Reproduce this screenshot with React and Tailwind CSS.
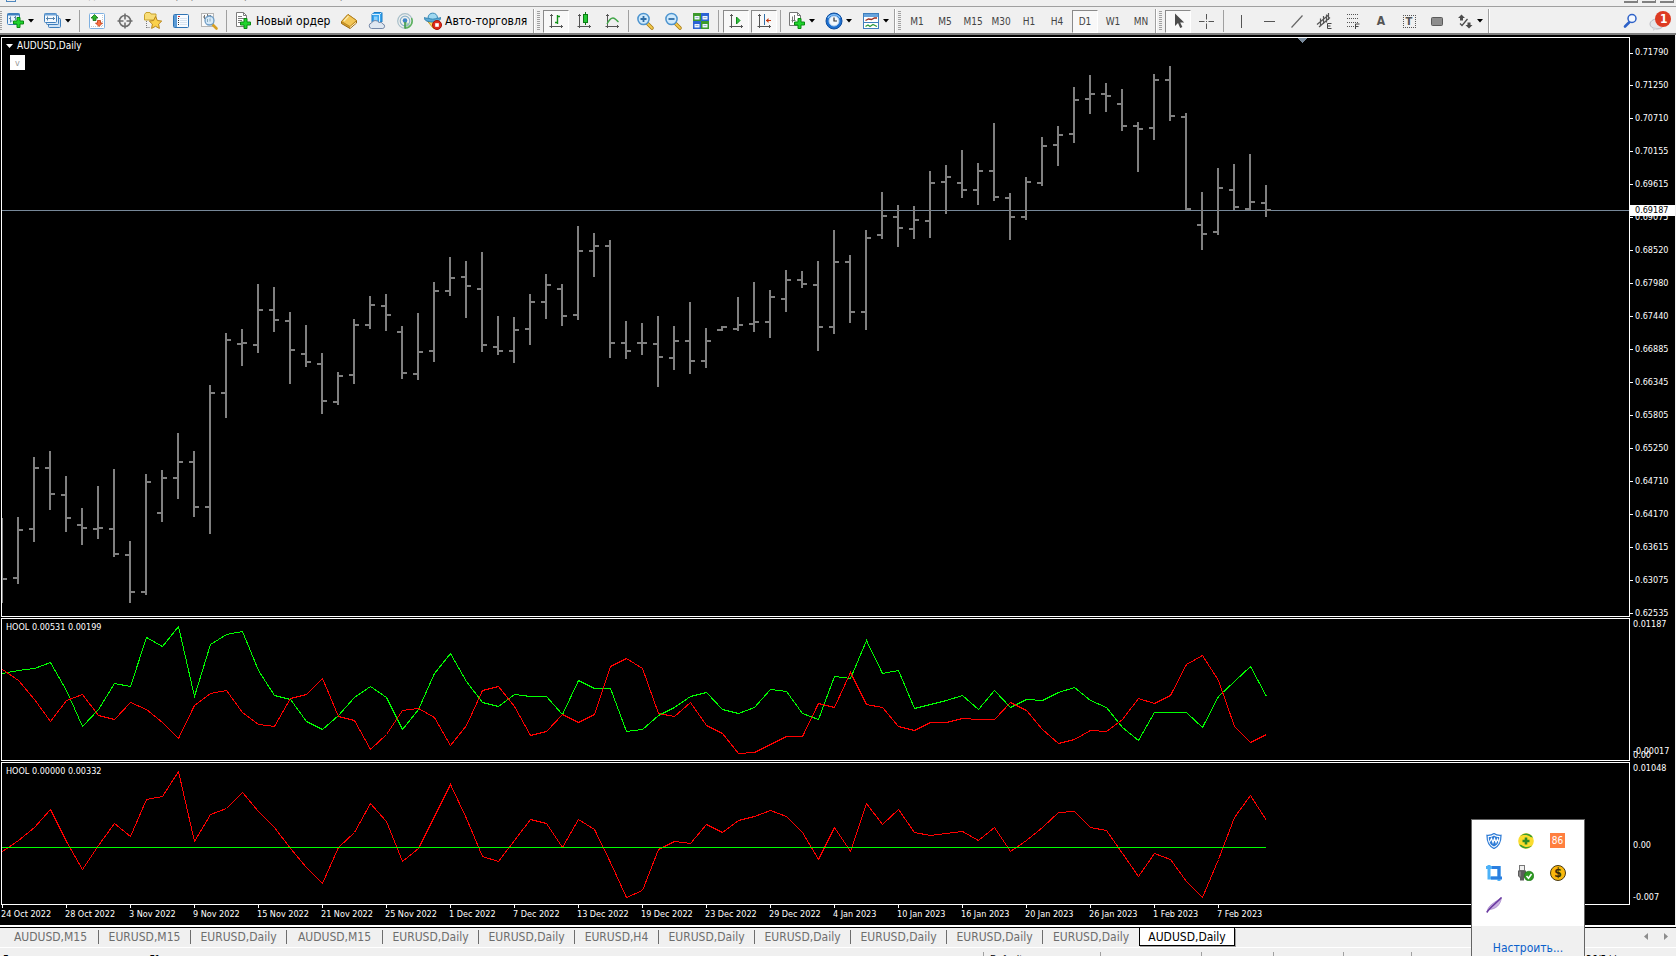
import { clsx } from 'clsx';

const STEP = 16;

// [high, low, open, close] of each daily bar, in chart pixels
const BARS = [
  [518, 603, null, 579], [517, 584, 578, 530], [457, 542, 529, 468], [451, 510, 468, 494],
  [476, 532, 495, 518], [508, 545, 525, 528], [486, 539, 529, 528], [469, 557, 529, 554],
  [541, 603, 555, 592], [474, 595, 592, 482], [470, 522, 513, 478], [433, 499, 478, 462],
  [451, 517, 462, 507], [385, 534, 507, 393], [333, 418, 393, 340], [329, 366, 344, 343],
  [284, 353, 345, 310], [287, 332, 310, 320], [312, 384, 321, 350], [325, 367, 354, 362],
  [353, 414, 364, 401], [372, 405, 402, 376], [319, 384, 375, 325], [296, 329, 325, 305],
  [294, 331, 306, 315], [326, 379, 332, 373], [313, 380, 374, 352], [282, 362, 351, 291],
  [257, 296, 291, 278], [261, 318, 277, 286], [252, 352, 289, 345], [316, 355, 347, 351],
  [317, 363, 351, 330], [294, 345, 329, 302], [274, 319, 302, 285], [284, 326, 289, 316],
  [226, 320, 315, 251], [233, 277, 251, 246], [240, 358, 246, 343], [321, 359, 343, 351],
  [323, 355, 343, 343], [316, 387, 344, 357], [326, 370, 358, 341], [302, 374, 341, 361],
  [328, 368, 361, 341], [326, 331, 330, 327], [297, 331, 329, 325], [282, 332, 324, 322],
  [290, 338, 322, 297], [270, 312, 299, 280], [271, 288, 280, 284], [261, 351, 285, 327],
  [230, 334, 327, 262], [255, 323, 262, 312], [230, 330, 312, 238], [192, 239, 235, 216],
  [205, 247, 217, 228], [206, 239, 229, 220], [171, 238, 221, 183], [165, 214, 182, 177],
  [150, 198, 183, 190], [163, 205, 190, 171], [123, 201, 171, 197], [193, 240, 198, 217],
  [177, 220, 217, 182], [137, 186, 183, 146], [126, 166, 145, 135], [87, 143, 134, 100],
  [75, 114, 99, 94], [83, 112, 94, 96], [89, 131, 104, 126], [122, 172, 126, 129],
  [74, 140, 128, 80], [66, 121, 80, 116], [113, 210, 117, 209], [192, 250, 225, 234],
  [168, 235, 232, 188], [164, 210, 190, 207], [154, 210, 209, 202], [185, 217, 203, 210],
];

// indicator buffers, in thirds of a pixel below the top of the window
const UP = [
  190, 179, 175, 157, 240, 349, 298, 219, 227, 80, 109, 49, 257, 103, 73, 64, 181, 256, 267, 334,
  356, 314, 262, 227, 260, 358, 297, 188, 130, 212, 277, 287, 253, 257, 257, 312, 211, 233, 233, 364,
  358, 316, 291, 257, 247, 297, 310, 291, 238, 244, 309, 328, 199, 203, 89, 190, 181, 295, 283, 271,
  254, 298, 241, 292, 268, 271, 245, 230, 271, 290, 350, 391, 307, 307, 307, 352, 257, 213, 169, 257,
];
const DOWN = [
  178, 211, 267, 332, 269, 253, 314, 328, 277, 296, 336, 385, 284, 250, 241, 307, 343, 347, 265, 252,
  203, 319, 329, 418, 373, 299, 295, 322, 406, 344, 239, 229, 287, 376, 364, 313, 335, 313, 169, 145,
  174, 310, 319, 277, 346, 368, 430, 427, 401, 379, 379, 280, 290, 187, 283, 290, 349, 361, 337, 337,
  325, 328, 328, 277, 300, 357, 400, 388, 361, 364, 328, 265, 280, 255, 163, 136, 211, 349, 397, 373,
];
const DIFF = [
  722, 691, 651, 596, 693, 778, 706, 638, 679, 566, 559, 482, 694, 613, 595, 547, 604, 652, 713, 770,
  820, 710, 667, 580, 634, 753, 713, 619, 523, 625, 739, 754, 691, 628, 640, 712, 628, 658, 757, 862,
  841, 716, 694, 700, 643, 667, 631, 619, 601, 619, 667, 748, 652, 724, 580, 643, 598, 667, 676, 670,
  664, 691, 652, 724, 691, 652, 607, 604, 652, 661, 730, 799, 730, 748, 814, 862, 748, 622, 556, 631,
];

const PRICES = [
  '0.71790', '0.71250', '0.70710', '0.70155', '0.69615', '0.69075', '0.68520', '0.67980', '0.67440',
  '0.66885', '0.66345', '0.65805', '0.65250', '0.64710', '0.64170', '0.63615', '0.63075', '0.62535',
];

const DATES = [
  '24 Oct 2022', '28 Oct 2022', '3 Nov 2022', '9 Nov 2022', '15 Nov 2022', '21 Nov 2022', '25 Nov 2022',
  '1 Dec 2022', '7 Dec 2022', '13 Dec 2022', '19 Dec 2022', '23 Dec 2022', '29 Dec 2022', '4 Jan 2023',
  '10 Jan 2023', '16 Jan 2023', '20 Jan 2023', '26 Jan 2023', '1 Feb 2023', '7 Feb 2023',
];

const MENU = ['Файл', 'Вид', 'Вставка', 'Графики', 'Сервис', 'Окно', 'Справка'];

const TABS = [
  ['AUDUSD,M15', 'w-24'], ['EURUSD,M15', 'w-[92px]'], ['EURUSD,Daily', 'w-24'], ['AUDUSD,M15', 'w-24'],
  ['EURUSD,Daily', 'w-24'], ['EURUSD,Daily', 'w-24'], ['EURUSD,H4', 'w-[84px]'], ['EURUSD,Daily', 'w-24'],
  ['EURUSD,Daily', 'w-24'], ['EURUSD,Daily', 'w-24'], ['EURUSD,Daily', 'w-24'], ['EURUSD,Daily', 'w-24'],
];

const linePoints = (values, top) =>
  values.map((v, i) => `${i * STEP + 0.5},${Math.round(v / 3) - top + 0.5}`).join(' ');

/* ---------- toolbar icons ---------- */

const Svg = ({ children, size = 20 }) => (
  <svg width={size} height={size} viewBox={`0 0 ${size} ${size}`} fill="none" className="shrink-0" aria-hidden="true">
    {children}
  </svg>
);

const Plus = ({ x, y }) => (
  <path
    transform={`translate(${x} ${y})`}
    d="M4 .5h3V4h3.500v3H7v3.500H4V7H.5V4H4z"
    fill="#1fd42c"
    stroke="#0a8a12"
  />
);

const NewChartIcon = () => (
  <Svg>
    <rect x="1.500" y="2.500" width="12" height="11" rx="1" fill="#eaf4fd" stroke="#3f7fbd" />
    <path d="M1.500 3.500h12" stroke="#3f7fbd" strokeWidth="2" />
    <path d="M4.500 5.500v6M3 7.500h1.500M4.500 10h2M9.500 5v4M8 6.500h1.500" stroke="#5a86ad" />
    <Plus x="7" y="6" />
  </Svg>
);

const ProfilesIcon = () => (
  <Svg>
    <rect x="5.500" y="7.500" width="12" height="9" rx="1" fill="#cfe3f6" stroke="#3f7fbd" />
    <rect x="3.500" y="4.500" width="12" height="9" rx="1" fill="#dcebf9" stroke="#3f7fbd" />
    <rect x="1.500" y="2.500" width="12" height="9" rx="1" fill="#f4f9fe" stroke="#3f7fbd" />
    <path d="M1.500 3.500h12" stroke="#6ea3d6" strokeWidth="2" />
    <path d="M4.500 5.500v4M3 7.500h9M10.500 6v3" stroke="#5a86ad" />
  </Svg>
);

const MarketIcon = () => (
  <Svg>
    <rect x="2.500" y="2.500" width="15" height="15" rx="1" fill="#fff" stroke="#7fb0e0" />
    <path d="M4 15.500h12M15.500 4v12" stroke="#c9c9c9" strokeDasharray="1 1" />
    <path d="M7.500 3.500l3.500 3.500H9v2.500H6V7H4z" fill="#2cb52c" stroke="#157015" strokeWidth=".8" />
    <path d="M12 15.500L8.500 12h2V9.500h3V12h2z" fill="#fb7142" stroke="#c03a12" strokeWidth=".8" />
  </Svg>
);

const CrosshairIcon = () => (
  <Svg>
    <circle cx="10" cy="10" r="5.500" stroke="#6e6e6e" strokeWidth="1.600" />
    <path d="M10 2.500v6M10 11.500v6M2.500 10h6M11.500 10h6" stroke="#6e6e6e" strokeWidth="1.600" />
  </Svg>
);

const FolderStarIcon = () => (
  <Svg>
    <path d="M1.500 3.500l1.500-2h4l1 1.500h5v6h-11.500z" fill="#f8dd78" stroke="#c8a22c" />
    <path d="M3.500 10v7M3.500 16.500h4" stroke="#777" strokeDasharray="1 1" />
    <path
      d="M12.500 5.500l1.900 4 4.300.6-3.100 3 .8 4.300-3.900-2.100-3.900 2.100.8-4.300-3.100-3 4.300-.6z"
      fill="#fbd14b"
      stroke="#b9861b"
    />
  </Svg>
);

const NavigatorIcon = () => (
  <Svg>
    <rect x="2.500" y="3.500" width="15" height="13" rx="1" fill="#f8fbff" stroke="#2f74b5" />
    <path d="M4.500 4v12" stroke="#5c9bd6" strokeWidth="3" />
    <path d="M7 5.500h2" stroke="#d03030" />
    <path d="M7 7.500h1M7 9.500h1M7 11.500h1M7 13.500h1" stroke="#333" />
    <path d="M9 7.500h7M9 9.500h7M9 11.500h7M9 13.500h7" stroke="#d7e3ef" />
  </Svg>
);

const TesterIcon = () => (
  <Svg>
    <rect x="2.500" y="2.500" width="12" height="13" fill="#fafafa" stroke="#b5b5b5" />
    <path d="M5.500 4v4M8.500 3v4M11.500 4v3M4 6h1.500M8.500 5h3" stroke="#777" />
    <path d="M13.500 13.500l4 4" stroke="#d79f22" strokeWidth="2.600" strokeLinecap="round" />
    <circle cx="10.500" cy="9.500" r="4.500" fill="#cfe6f9" fillOpacity=".85" stroke="#6f9dc6" strokeWidth="1.300" />
    <path d="M8.500 8v3M11 7.500v3" stroke="#8ab" />
  </Svg>
);

const NewOrderIcon = () => (
  <Svg>
    <path d="M2.500 1.500h7l3 3v11h-10z" fill="#fff" stroke="#7d7d7d" />
    <path d="M9.500 1.500v3h3M4 5.500h4M4 7.500h6M4 9.500h4M4 11.500h3" stroke="#7d7d7d" />
    <Plus x="6" y="7" />
  </Svg>
);

const BookIcon = () => (
  <Svg>
    <path d="M2.500 10.500L9 3.500l8.500 6v2.500L11 17.500l-8.500-5z" fill="#d8a12c" stroke="#9a6a12" />
    <path d="M2.500 10.500L9 3.500l8.500 6-6.500 6z" fill="#f3c758" stroke="#b07e1a" strokeWidth=".8" />
    <path d="M5 10l4.500-5" stroke="#fce9ab" strokeWidth="1.300" />
    <path d="M11 16.500l6-5" stroke="#fff0c8" />
  </Svg>
);

const CloudIcon = () => (
  <Svg>
    <path d="M5 3.500l2-2h8v9.500H5z" fill="#3aa5ee" stroke="#1b7cc6" />
    <path d="M5 3.500h7.500V11M12.500 3.500l2-2" stroke="#d6efff" />
    <path d="M7 5.500h3.500v4H7z" fill="#8bd0fb" />
    <path
      d="M4.500 17.500a2.800 2.800 0 010-5.500 4.200 4 0 017.500-.5 2.800 2.800 0 013.800 1.500 2.300 2.300 0 010 4.500z"
      fill="#dfe7f1"
      stroke="#7488a8"
    />
  </Svg>
);

const SignalIcon = () => (
  <Svg>
    <path d="M10 10v7.500a7.500 7.500 0 006-3z" fill="#a9d6a9" />
    <circle cx="10" cy="10" r="7.300" stroke="#a8bfc9" strokeWidth="1.200" />
    <circle cx="10" cy="10" r="4.800" stroke="#8cb3c8" strokeWidth="1.200" />
    <path d="M16.500 7a7 7 0 01-6.500 10" stroke="#5cb35c" strokeWidth="1.400" />
    <circle cx="10" cy="9.500" r="2.300" fill="#3f86c6" />
    <path d="M10 11v6.500" stroke="#3f9a4a" strokeWidth="1.600" />
  </Svg>
);

const AutoTradeIcon = () => (
  <Svg>
    <path d="M3.500 9h12l-5 8.500z" fill="#f5d35d" stroke="#c79a21" />
    <path d="M1.500 6.500c2 1.500 14 1.500 16 0 .5 3-3 4.500-8 4.500s-8.500-1.500-8-4.500z" fill="#5aaad6" stroke="#2f7fae" />
    <path d="M5 7c0-6.500 9.500-6.500 9.500 0-2.500 1.500-7 1.500-9.500 0z" fill="#9fd8f0" stroke="#3a8bb8" />
    <circle cx="14" cy="14" r="4.500" fill="#e02a1a" stroke="#a81508" />
    <rect x="12.200" y="12.200" width="3.600" height="3.600" fill="#fff" />
  </Svg>
);

const Axes = () => (
  <path d="M5.500 3v14M4 4.500h3M3.500 15.500h13.500M15.500 14v3" stroke="#555" />
);

const BarChartIcon = () => (
  <Svg>
    <Axes />
    <path d="M11.500 4v9M9 11.500h2.500M11.500 5.500H14" stroke="#14911a" strokeWidth="1.400" />
  </Svg>
);

const CandleIcon = () => (
  <Svg>
    <Axes />
    <path d="M11.500 1v13" stroke="#0d7a15" />
    <rect x="9.500" y="3.500" width="4" height="8" fill="#25c934" stroke="#0d7a15" />
  </Svg>
);

const LineChartIcon = () => (
  <Svg>
    <Axes />
    <path d="M5 13c2-4 4-6 6-6s3 2 5.500 4" stroke="#3fa546" strokeWidth="1.300" />
  </Svg>
);

const ZoomIcon = ({ plus }) => (
  <Svg>
    <path d="M12.500 12.500l4.500 4.500" stroke="#a87a14" strokeWidth="3.600" strokeLinecap="round" />
    <path d="M12.500 12.500l4.500 4.500" stroke="#f3cb4d" strokeWidth="1.800" strokeLinecap="round" />
    <circle cx="8.500" cy="8" r="5.600" fill="#cfe9fb" stroke="#4d94cf" strokeWidth="1.500" />
    <path d={plus ? 'M8.500 5v6M5.500 8h6' : 'M5.500 8h6'} stroke="#2f6ea8" strokeWidth="1.800" />
  </Svg>
);

const TileIcon = () => (
  <Svg>
    <rect x="2" y="2" width="8" height="8" fill="#3c9a2c" />
    <rect x="10" y="2" width="8" height="8" fill="#2b63d4" />
    <rect x="2" y="10" width="8" height="8" fill="#2b63d4" />
    <rect x="10" y="10" width="8" height="8" fill="#3c9a2c" />
    <path d="M3.500 5h5v3.500h-5zM11.500 5h5v3.500h-5zM3.500 13h5v3.500h-5zM11.500 13h5v3.500h-5z" fill="#eef6ff" />
    <path d="M4.500 6.500h3M12.500 6.500h3M4.500 14.500h3M12.500 14.500h3" stroke="#9db7cf" />
  </Svg>
);

const AutoScrollIcon = () => (
  <Svg>
    <Axes />
    <path d="M10.500 6v7l3.500-3.500z" fill="#2fc53b" stroke="#118a1b" />
  </Svg>
);

const ShiftIcon = () => (
  <Svg>
    <Axes />
    <path d="M10.500 3v11" stroke="#2f6ea8" />
    <path d="M12 9.500h5" stroke="#c33a12" />
    <path d="M14.500 7v5L12 9.500z" fill="#c33a12" />
  </Svg>
);

const TemplateIcon = () => (
  <Svg>
    <path d="M2.500 1.500h8l3 3v10h-11z" fill="#fff" stroke="#777" />
    <path d="M10.500 1.500v3h3M5.500 5.500v6M7.500 4v5M4.500 9.500h4" stroke="#777" />
    <Plus x="7" y="7" />
  </Svg>
);

const ClockIcon = () => (
  <Svg>
    <circle cx="10" cy="10" r="8" fill="#1c6fd0" stroke="#0e4d9e" />
    <path d="M4 7a7 7 0 0112 0" stroke="#86c2f7" strokeWidth="1.400" />
    <circle cx="10" cy="10" r="5" fill="#f2f7fc" stroke="#b6d2ee" />
    <path d="M10 6.500V10h3" stroke="#333" strokeWidth="1.200" />
  </Svg>
);

const IndicatorsIcon = () => (
  <Svg>
    <rect x="2.500" y="2.500" width="15" height="15" fill="#fff" stroke="#3f7fbd" />
    <path d="M3 4.500h14" stroke="#67a4dd" strokeWidth="3" />
    <path d="M3 11.500h14" stroke="#3f7fbd" />
    <path d="M4.500 9.500l3-1.500 3 .5 3-1.500h2.500" stroke="#9b2c1c" strokeWidth="1.300" />
    <path d="M4.500 15.500l2.500-1.500 2 1.500 3-2 4 2" stroke="#2f9a3c" strokeWidth="1.300" />
  </Svg>
);

const PointerIcon = () => (
  <Svg>
    <path d="M7 2.500v12.500l3-3 2.200 5 2.200-1-2.200-4.500h4z" fill="#4c4c4c" />
  </Svg>
);

const CrossIcon = () => (
  <Svg>
    <path d="M10.500 3v5.500M10.500 12.500v5.500M3 10.500h5.500M12.500 10.500h5.500M10 10.500h1" stroke="#555" />
  </Svg>
);

const VLineIcon = () => <Svg><path d="M10.500 4v13" stroke="#555" /></Svg>;
const HLineIcon = () => <Svg><path d="M5 10.500h11" stroke="#555" /></Svg>;
const TrendIcon = () => <Svg><path d="M4.500 16.500L15.500 4.500" stroke="#666" strokeWidth="1.200" /></Svg>;

const ChannelIcon = () => (
  <Svg>
    <path d="M2 13.500L13.500 4M4 16L15 6.500M5.500 7.500v8M8.500 5v8M11.500 3.500v8M13.500 2v7" stroke="#555" strokeWidth="1.200" />
    <path d="M16.500 12.500h-4v5h4M12.500 15h3" stroke="#444" />
  </Svg>
);

const FiboIcon = () => (
  <Svg>
    <path d="M4 3.500h12M4 7.500h12M4 11.500h12M4 15.500h7" stroke="#555" strokeDasharray="1 1" />
    <path d="M12.500 18v-5h4M12.500 15.500h3" stroke="#444" />
  </Svg>
);

const RectIcon = () => (
  <Svg>
    <rect x="4.500" y="6.500" width="11" height="8" rx="1" fill="#8d8d8d" stroke="#5b5b5b" />
  </Svg>
);

const ArrowsIcon = () => (
  <Svg>
    <path d="M6.500 3.500L10 7H8v2.500H5V7H3zM14 17.500L10.500 14h2v-2.500h3V14h2z" fill="#4c4c4c" />
    <path d="M5 12.500l2 2L12.500 8" stroke="#4c4c4c" strokeWidth="1.300" />
  </Svg>
);

const SearchIcon = () => (
  <Svg>
    <path d="M5 15.500l5-5" stroke="#2e62c8" strokeWidth="2.600" strokeLinecap="round" />
    <circle cx="12" cy="7.500" r="4" fill="#f4f8ff" stroke="#2e62c8" strokeWidth="1.500" />
  </Svg>
);

/* ---------- toolbar parts ---------- */

const ToolButton = ({ label, pressed, children }) => (
  <button
    type="button"
    aria-label={label}
    title={label}
    className={clsx(
      'flex h-[23px] w-[26px] mx-px shrink-0 items-center justify-center',
      pressed && 'border border-t-[#8a8a8a] border-l-[#8a8a8a] border-r-white border-b-white bg-[#f8f8f8]'
    )}
  >
    {children}
  </button>
);

const MenuButton = ({ label, children }) => (
  <button type="button" aria-label={label} title={label} className="flex h-[23px] w-[37px] shrink-0 items-center gap-px pl-1">
    {children}
    <svg width="7" height="4" className="ml-px shrink-0" aria-hidden="true">
      <path d="M0 0h6L3 3.500z" fill="#000" />
    </svg>
  </button>
);

const TextButton = ({ icon, children, className }) => (
  <button type="button" className={clsx('flex h-[23px] shrink-0 items-center gap-0.5 pl-1 text-[12px] text-black whitespace-nowrap', className)}>
    {icon}
    <span>{children}</span>
  </button>
);

const Divider = ({ tight }) => (
  <div className={clsx('h-[22px] w-px shrink-0 bg-[#a0a0a0]', tight ? 'mx-0.5' : 'mx-[3px]')} />
);

const Grip = () => (
  <svg width="3" height="20" className="mx-0.5 shrink-0" aria-hidden="true">
    <path d="M1.500 0v20" stroke="#a0a0a0" strokeWidth="3" strokeDasharray="1 1" />
  </svg>
);

const GroupEnd = () => <div className="h-[25px] w-0.5 shrink-0 border-l border-[#a0a0a0] bg-white" />;

const PERIODS = ['M1', 'M5', 'M15', 'M30', 'H1', 'H4', 'D1', 'W1', 'MN'];

const Toolbar = () => (
  <div className="flex h-[29px] shrink-0 items-center overflow-hidden border-t border-b-2 border-t-[#a0a0a0] border-b-[#808080] bg-[#f0f0f0] pt-0.5">
    <svg width="2" height="20" className="shrink-0" aria-hidden="true">
      <path d="M1 0v20" stroke="#a0a0a0" strokeWidth="2" strokeDasharray="1 1" />
    </svg>
    <MenuButton label="Новый график"><NewChartIcon /></MenuButton>
    <MenuButton label="Профили"><ProfilesIcon /></MenuButton>
    <Divider />
    <ToolButton label="Обзор рынка"><MarketIcon /></ToolButton>
    <ToolButton label="Окно данных"><CrosshairIcon /></ToolButton>
    <ToolButton label="Навигатор"><FolderStarIcon /></ToolButton>
    <ToolButton label="Терминал"><NavigatorIcon /></ToolButton>
    <ToolButton label="Тестер стратегий"><TesterIcon /></ToolButton>
    <Divider />
    <TextButton icon={<NewOrderIcon />} className="w-[105px]">Новый ордер</TextButton>
    <ToolButton label="MetaEditor"><BookIcon /></ToolButton>
    <ToolButton label="Хостинг"><CloudIcon /></ToolButton>
    <ToolButton label="Сигналы"><SignalIcon /></ToolButton>
    <TextButton icon={<AutoTradeIcon />} className="w-[114px]">Авто-торговля</TextButton>
    <GroupEnd />
    <Grip />
    <ToolButton label="Бары" pressed><BarChartIcon /></ToolButton>
    <ToolButton label="Японские свечи"><CandleIcon /></ToolButton>
    <ToolButton label="Линия"><LineChartIcon /></ToolButton>
    <Divider tight />
    <ToolButton label="Увеличить"><ZoomIcon plus /></ToolButton>
    <ToolButton label="Уменьшить"><ZoomIcon /></ToolButton>
    <ToolButton label="Окна рядом"><TileIcon /></ToolButton>
    <Divider />
    <ToolButton label="Автопрокрутка" pressed><AutoScrollIcon /></ToolButton>
    <ToolButton label="Сдвиг графика" pressed><ShiftIcon /></ToolButton>
    <Divider tight />
    <MenuButton label="Индикаторы"><TemplateIcon /></MenuButton>
    <MenuButton label="Периоды"><ClockIcon /></MenuButton>
    <MenuButton label="Шаблоны"><IndicatorsIcon /></MenuButton>
    <GroupEnd />
    <Grip />
    {PERIODS.map((period) => (
      <ToolButton key={period} label={period} pressed={period === 'D1'}>
        <span className="text-[10px] text-[#444]">{period}</span>
      </ToolButton>
    ))}
    <GroupEnd />
    <Grip />
    <ToolButton label="Курсор" pressed><PointerIcon /></ToolButton>
    <ToolButton label="Перекрестие"><CrossIcon /></ToolButton>
    <Divider />
    <ToolButton label="Вертикальная линия"><VLineIcon /></ToolButton>
    <ToolButton label="Горизонтальная линия"><HLineIcon /></ToolButton>
    <ToolButton label="Трендовая линия"><TrendIcon /></ToolButton>
    <ToolButton label="Равноудаленный канал"><ChannelIcon /></ToolButton>
    <ToolButton label="Линии Фибоначчи"><FiboIcon /></ToolButton>
    <ToolButton label="Текст"><span className="text-[12px] font-bold text-[#555]">A</span></ToolButton>
    <ToolButton label="Текстовая метка">
      <span className="flex h-[13px] w-[13px] items-center justify-center border border-dotted border-[#555] text-[11px] leading-none font-bold text-[#555]">T</span>
    </ToolButton>
    <ToolButton label="Прямоугольник"><RectIcon /></ToolButton>
    <MenuButton label="Стрелки"><ArrowsIcon /></MenuButton>
    <GroupEnd />
    <div className="ml-auto flex items-center pr-1">
      <ToolButton label="Поиск"><SearchIcon /></ToolButton>
      <button type="button" className="relative ml-1 h-[23px] w-6" aria-label="Уведомления">
        <svg width="24" height="23" aria-hidden="true">
          <ellipse cx="9" cy="14" rx="7" ry="5" fill="#e4e4e8" stroke="#b9b9c0" />
          <path d="M5 17v4l4-3z" fill="#d4d4da" />
          <circle cx="15" cy="9" r="8" fill="#dd3a22" />
        </svg>
        <span className="absolute top-0.5 left-3 text-[12px] leading-[14px] font-bold text-white">1</span>
      </button>
    </div>
  </div>
);

/* ---------- charts ---------- */

const Panel = ({ height, children, axis }) => (
  <div className="flex">
    <div className="relative ml-px min-w-0 flex-1 border border-white">
      <svg width="100%" height={height} className="block" shapeRendering="crispEdges">
        {children}
      </svg>
    </div>
    <div className="relative w-[45px] shrink-0">{axis}</div>
  </div>
);

const PriceAxis = () => (
  <div className="h-[580px] overflow-hidden">
    {PRICES.map((price, i) => (
      <div key={price} className={clsx('flex items-center gap-0.5', i === 0 ? 'h-8' : 'h-[33px]')}>
        <span className="h-px w-[3px] bg-white" />
        {price}
      </div>
    ))}
    <div className="absolute top-[168px] left-0 flex h-[11px] w-full items-center bg-white pl-[5px] text-black">0.69187</div>
  </div>
);

const UpperAxis = () => (
  <div className="flex h-[143px] flex-col justify-between overflow-hidden pl-[3px] leading-3">
    <span>0.01187</span>
    <div>
      <div className="-mb-2">-0.00017</div>
      <div>0.00</div>
    </div>
  </div>
);

const LowerAxis = () => (
  <div className="flex h-[143px] flex-col justify-between pl-[3px] leading-3">
    <span>0.01048</span>
    <span className="pt-6">0.00</span>
    <span className="pb-0.5">-0.007</span>
  </div>
);

const Chart = () => (
  <main className="relative shrink-0 border-r border-[#f0f0f0] bg-black pt-0.5 text-[9px] text-white">
    <div className="mb-px">
      <Panel height={578} axis={<PriceAxis />}>
        <line x1="0" x2="100%" y1="172.500" y2="172.500" stroke="#778899" />
        <g transform="translate(0 -38)" stroke="#808080" strokeWidth="2">
          {BARS.map(([high, low, open, close], i) => {
            const x = i * STEP;
            return (
              <path
                key={i}
                d={`M${x} ${high}V${low}${open === null ? '' : `M${x - 5} ${open}H${x}`}M${x} ${close}H${x + 5}`}
              />
            );
          })}
        </g>
        <path d="M1296 0h9l-4.500 5z" fill="#778899" />
      </Panel>
      <div className="absolute top-[5px] left-1.5 flex items-center gap-1 text-[10px] leading-3">
        <svg width="7" height="4" aria-hidden="true">
          <path d="M0 0h7L3.500 4z" fill="#fff" />
        </svg>
        AUDUSD,Daily
      </div>
      <button type="button" className="absolute top-5 left-2.5 h-[15px] w-[15px] bg-white text-[9px] leading-3 text-[#999]">v</button>
    </div>
    <div className="relative mb-px">
      <Panel height={141} axis={<UpperAxis />}>
        <polyline points={linePoints(UP, 9)} fill="none" stroke="#00ff00" />
        <polyline points={linePoints(DOWN, 9)} fill="none" stroke="#ff0000" />
      </Panel>
      <span className="absolute top-[3px] left-1.5 leading-3">HOOL 0.00531 0.00199</span>
    </div>
    <div className="relative">
      <Panel height={141} axis={<LowerAxis />}>
        <polyline points={linePoints(DIFF, 153)} fill="none" stroke="#ff0000" />
        <path d={`M0 84.500H${79 * STEP}`} stroke="#00ff00" />
      </Panel>
      <span className="absolute top-[3px] left-1.5 leading-3">HOOL 0.00000 0.00332</span>
    </div>
    <div className="flex h-5 overflow-hidden pl-px">
      {DATES.map((date) => (
        <div key={date} className="w-16 shrink-0 whitespace-nowrap leading-3">
          <div className="ml-px h-[3px] w-px bg-white" />
          {date}
        </div>
      ))}
    </div>
  </main>
);

/* ---------- bottom bars ---------- */

const ChartTabs = () => (
  <nav className="flex h-5 shrink-0 items-start border-t border-t-black bg-[#f0f0f0] pl-[3px] text-[12px] text-[#6d6d6d]">
    {TABS.map(([name, width], i) => (
      <div key={i} className={clsx('flex h-[18px] shrink-0 items-center', width)}>
        <button type="button" className="flex-1 text-center leading-4">{name}</button>
        {i < TABS.length - 1 && <span className="h-3.5 w-px bg-[#6d6d6d]" />}
      </div>
    ))}
    <button type="button" className="h-[18px] w-24 shrink-0 border border-t-0 border-black bg-white leading-4 text-black shadow-[1px_1px_0_#a0a0a0]">
      AUDUSD,Daily
    </button>
    <div className="ml-auto flex h-4 items-center gap-4 pr-2">
      <button type="button" aria-label="Назад" className="flex items-center">
        <svg width="4" height="7"><path d="M4 0v7L0 3.500z" fill="#8d8d8d" /></svg>
      </button>
      <button type="button" aria-label="Вперед" className="flex items-center">
        <svg width="4" height="7"><path d="M0 0v7l4-3.500z" fill="#8d8d8d" /></svg>
      </button>
    </div>
  </nav>
);

const StatusBar = () => (
  <footer className="flex min-h-0 flex-1 items-start overflow-hidden border-t border-white bg-[#f0f0f0] pt-1 text-[10px] leading-4 text-black">
    <span className="flex-1 pl-0.5">Для вызова справки, нажмите F1</span>
    <span className="w-[117px] border-l border-[#a0a0a0] pl-1.5">Default</span>
    <span className="h-4 w-[101px] border-l border-[#a0a0a0]" />
    <span className="h-4 w-[72px] border-l border-[#a0a0a0]" />
    <span className="h-4 w-[70px] border-l border-[#a0a0a0]" />
    <span className="h-4 w-[68px] border-l border-[#a0a0a0]" />
    <span className="h-4 w-[175px] border-l border-[#a0a0a0]" />
    <span className="w-[90px]">36/5 kb</span>
  </footer>
);

const TrayPopup = () => (
  <aside className="absolute right-[91px] bottom-0 flex w-[114px] flex-col border border-b-0 border-[#646464] bg-white">
    <div className="grid grid-cols-[16px_16px_16px] gap-4 px-3.5 py-[13px]">
      <svg width="16" height="16" viewBox="0 0 16 16" aria-hidden="true">
        <path d="M8 .5c2 1.500 4.500 2 7 1.800 0 6-1 10.500-7 13.200C2 12.800 1 8.300 1 2.300c2.500.2 5-.3 7-1.800z" fill="#fff" stroke="#2f7cd6" strokeWidth="1.300" />
        <path d="M8 2.500c1.600 1 3.300 1.500 5.200 1.500 0 4.500-1.200 7.700-5.200 9.500C4 11.700 2.800 8.500 2.800 4c1.900 0 3.600-.5 5.200-1.500z" fill="#2f7cd6" />
        <path d="M3.500 9L5.500 5.500 7 9.500l1.500-4L10 9.500l1.500-3.500 1.300 3" fill="none" stroke="#fff" strokeWidth="1.200" />
      </svg>
      <svg width="16" height="16" viewBox="0 0 16 16" aria-hidden="true">
        <circle cx="8" cy="8" r="7.800" fill="#fbdc2e" />
        <path d="M2 3.500A7.800 7.800 0 0115 4.500l-2.500-.5C9.500 1.500 5 1.500 2 3.500zM14 12.500A7.800 7.800 0 011 11.500l2.500.5c3 2.500 7.500 2.500 10.500.5z" fill="#3a9d2f" />
        <path d="M8 4.500v7M4.500 8h7" stroke="#2d8a26" strokeWidth="2.600" />
      </svg>
      <span className="flex h-[15px] w-[15px] items-center justify-center bg-[#ff7f3f] text-[10px] leading-none text-white">86</span>
      <svg width="16" height="16" viewBox="0 0 16 16" fill="none" aria-hidden="true">
        <path d="M3 0v13h10" stroke="#4db2f8" strokeWidth="3" />
        <path d="M0 2.500h13V16" stroke="#4db2f8" strokeWidth="3" />
        <path d="M6 2.500h7V13M5 13h11" stroke="#2b7fe0" strokeWidth="3" />
      </svg>
      <svg width="16" height="16" viewBox="0 0 16 16" aria-hidden="true">
        <rect x="1.500" y=".5" width="5" height="5" fill="#f0f0f0" stroke="#777" />
        <path d="M0 5.500h8V11l-2 2v2.500H2V13l-2-2z" fill="#5c5c5c" />
        <path d="M2 6.500v5" stroke="#aaa" />
        <circle cx="11" cy="11" r="4.800" fill="#2c9a20" stroke="#1a6f12" strokeWidth=".6" />
        <path d="M8.500 11l2 2.300 3-4.300" fill="none" stroke="#fff" strokeWidth="1.600" />
      </svg>
      <span className="flex h-4 w-4 items-center justify-center rounded-full border border-[#4a3a12] bg-[#fbb80c] text-[12px] leading-none font-bold text-[#3a2c08]">$</span>
      <svg width="16" height="16" viewBox="0 0 16 16" fill="none" aria-hidden="true">
        <path d="M1 15C2 8 8 6 15.500.5 14.500 8 10 12 3.500 12.500z" fill="#c9b0e0" stroke="#9a78c2" strokeWidth=".6" />
        <path d="M.8 15.500C4 10 9 7.500 15.500.5" stroke="#6a3aa0" strokeWidth="1.500" />
      </svg>
    </div>
    <a href="#tray" className="h-[30px] bg-[#f0f0f0] pt-3.5 text-center text-[12px] leading-4 text-[#0a5fcb]">Настроить...</a>
  </aside>
);

const MenuStrip = () => (
  <header className="flex h-1.5 shrink-0 items-start justify-between overflow-hidden bg-[#f0f0f0]">
    <div className="flex items-start">
      <span className="mr-4 ml-1.5 h-0.5 w-2.5 border border-t-0 border-[#4d86bd]" />
      <nav className="-mt-2.5 flex gap-4 text-[11px] leading-3 text-[#8a8a8a]">
        {MENU.map((item) => (
          <button key={item} type="button">{item}</button>
        ))}
      </nav>
    </div>
    <div className="flex gap-1 pr-0.5">
      {['min', 'max', 'close'].map((name) => (
        <span key={name} className="h-[3px] w-3.5 border-r border-b-2 border-[#808080]" />
      ))}
    </div>
  </header>
);

export default function App() {
  return (
    <div className="relative flex h-screen flex-col overflow-hidden bg-[#f0f0f0] font-['DejaVu_Sans_Condensed','DejaVu_Sans',sans-serif]">
      <MenuStrip />
      <Toolbar />
      <Chart />
      <div className="h-0.5 shrink-0 bg-white" />
      <ChartTabs />
      <StatusBar />
      <TrayPopup />
    </div>
  );
}
